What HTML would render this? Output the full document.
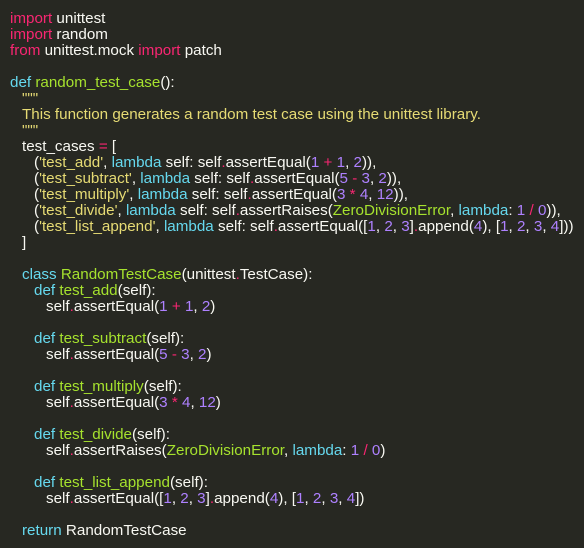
<!DOCTYPE html>
<html><head><meta charset="utf-8"><style>
html,body{margin:0;padding:0;background:#272822;width:584px;height:548px;overflow:hidden}
pre{margin:0;padding:11px 0 0 10px;font-family:"Liberation Sans",sans-serif;font-size:15.2px;line-height:16px;color:#f8f8f2;white-space:pre}
.k{color:#f92672}.d{color:#66d9ef}.f{color:#a6e22e}.s{color:#e6db74}.n{color:#ae81ff}
.i1{padding-left:12px}.i2{padding-left:24px}.i3{padding-left:36px}
</style></head><body><pre><span class="k">import</span> unittest
<span class="k">import</span> random
<span class="k">from</span> unittest.mock <span class="k">import</span> patch

<span class="d">def</span> <span class="f">random_test_case</span>():
<span class="i1 s">"""</span>
<span class="i1 s">This function generates a random test case using the unittest library.</span>
<span class="i1 s">"""</span>
<span class="i1">test_cases <span class="k">=</span> [</span>
<span class="i2">(<span class="s">'test_add'</span>, <span class="d">lambda</span> self: self<span class="k">.</span>assertEqual(<span class="n">1</span> <span class="k">+</span> <span class="n">1</span>, <span class="n">2</span>)),</span>
<span class="i2">(<span class="s">'test_subtract'</span>, <span class="d">lambda</span> self: self<span class="k">.</span>assertEqual(<span class="n">5</span> <span class="k">-</span> <span class="n">3</span>, <span class="n">2</span>)),</span>
<span class="i2">(<span class="s">'test_multiply'</span>, <span class="d">lambda</span> self: self<span class="k">.</span>assertEqual(<span class="n">3</span> <span class="k">*</span> <span class="n">4</span>, <span class="n">12</span>)),</span>
<span class="i2">(<span class="s">'test_divide'</span>, <span class="d">lambda</span> self: self<span class="k">.</span>assertRaises(<span class="f">ZeroDivisionError</span>, <span class="d">lambda</span>: <span class="n">1</span> <span class="k">/</span> <span class="n">0</span>)),</span>
<span class="i2">(<span class="s">'test_list_append'</span>, <span class="d">lambda</span> self: self<span class="k">.</span>assertEqual([<span class="n">1</span>, <span class="n">2</span>, <span class="n">3</span>]<span class="k">.</span>append(<span class="n">4</span>), [<span class="n">1</span>, <span class="n">2</span>, <span class="n">3</span>, <span class="n">4</span>]))</span>
<span class="i1">]</span>

<span class="i1"><span class="d">class</span> <span class="f">RandomTestCase</span>(unittest<span class="k">.</span>TestCase):</span>
<span class="i2"><span class="d">def</span> <span class="f">test_add</span>(self):</span>
<span class="i3">self<span class="k">.</span>assertEqual(<span class="n">1</span> <span class="k">+</span> <span class="n">1</span>, <span class="n">2</span>)</span>

<span class="i2"><span class="d">def</span> <span class="f">test_subtract</span>(self):</span>
<span class="i3">self<span class="k">.</span>assertEqual(<span class="n">5</span> <span class="k">-</span> <span class="n">3</span>, <span class="n">2</span>)</span>

<span class="i2"><span class="d">def</span> <span class="f">test_multiply</span>(self):</span>
<span class="i3">self<span class="k">.</span>assertEqual(<span class="n">3</span> <span class="k">*</span> <span class="n">4</span>, <span class="n">12</span>)</span>

<span class="i2"><span class="d">def</span> <span class="f">test_divide</span>(self):</span>
<span class="i3">self<span class="k">.</span>assertRaises(<span class="f">ZeroDivisionError</span>, <span class="d">lambda</span>: <span class="n">1</span> <span class="k">/</span> <span class="n">0</span>)</span>

<span class="i2"><span class="d">def</span> <span class="f">test_list_append</span>(self):</span>
<span class="i3">self<span class="k">.</span>assertEqual([<span class="n">1</span>, <span class="n">2</span>, <span class="n">3</span>]<span class="k">.</span>append(<span class="n">4</span>), [<span class="n">1</span>, <span class="n">2</span>, <span class="n">3</span>, <span class="n">4</span>])</span>

<span class="i1"><span class="d">return</span> RandomTestCase</span></pre></body></html>
